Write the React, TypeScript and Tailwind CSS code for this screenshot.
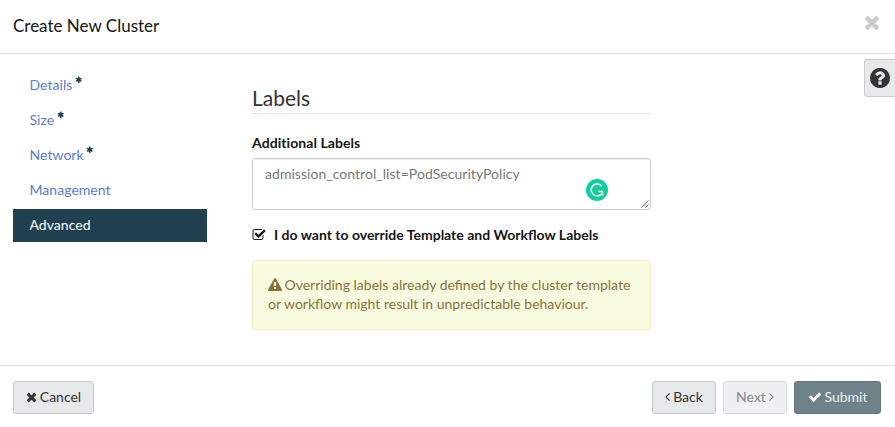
import React from 'react';

type IconProps = { d: string; className?: string; box?: string };

const Icon = ({ d, className = '', box = '0 0 1792 1792' }: IconProps) => (
  <svg viewBox={box} fill="currentColor" aria-hidden="true" className={`shrink-0 ${className}`}>
    <path d={d} />
  </svg>
);

const TIMES =
  'M1490 1322q0 40-28 68l-136 136q-28 28-68 28t-68-28l-294-294-294 294q-28 28-68 28t-68-28l-136-136q-28-28-28-68t28-68l294-294-294-294q-28-28-28-68t28-68l136-136q28-28 68-28t68 28l294 294 294-294q28-28 68-28t68 28l136 136q28 28 28 68t-28 68l-294 294 294 294q28 28 28 68z';
const CHECK =
  'M1671 566q0 40-28 68l-724 724-136 136q-28 28-68 28t-68-28l-136-136-362-362q-28-28-28-68t28-68l136-136q28-28 68-28t68 28l294 295 656-657q28-28 68-28t68 28l136 136q28 28 28 68z';
const WARNING =
  'M1024 1375v-190q0-14-9.5-23.5t-22.5-9.5h-192q-13 0-22.5 9.5t-9.5 23.5v190q0 14 9.5 23.5t22.5 9.5h192q13 0 22.5-9.5t9.5-23.5zm-2-374l18-459q0-12-10-19-13-11-24-11h-220q-11 0-24 11-10 7-10 21l17 457q0 10 10 16.5t24 6.5h185q14 0 23.5-6.5t10.5-16.5zm-14-934l768 1408q35 63-2 126-17 29-46.5 46t-63.5 17h-1536q-34 0-63.5-17t-46.5-46q-37-63-2-126l768-1408q17-31 47-49t65-18 65 18 47 49z';
const CHECK_SQUARE =
  'M1472 930v318q0 119-84.5 203.5t-203.5 84.5h-832q-119 0-203.5-84.5t-84.5-203.5v-832q0-119 84.5-203.5t203.5-84.5h832q63 0 117 25 15 7 18 23 3 17-9 29l-49 49q-10 10-23 10-3 0-9-2-23-6-45-6h-832q-66 0-113 47t-47 113v832q0 66 47 113t113 47h832q66 0 113-47t47-113v-254q0-13 9-22l64-64q10-10 23-10 6 0 12 3 20 8 20 29zm231-489l-814 814q-24 24-57 24t-57-24l-430-430q-24-24-24-57t24-57l110-110q24-24 57-24t57 24l263 263 647-647q24-24 57-24t57 24l110 110q24 24 24 57t-24 57z';
const QUESTION =
  'M1024 1376v-192q0-14-9-23t-23-9h-192q-14 0-23 9t-9 23v192q0 14 9 23t23 9h192q14 0 23-9t9-23zm256-672q0-88-55.5-163t-138.5-116-170-41q-243 0-371 213-15 24 8 42l132 100q7 6 19 6 16 0 25-12 53-68 86-92 34-24 86-24 48 0 85.5 26t37.5 59q0 38-20 61t-68 45q-63 28-115.5 86.5t-52.5 125.5v36q0 14 9 23t23 9h192q14 0 23-9t9-23q0-19 21.5-49.5t54.5-49.5q32-18 49-28.5t46-35 44.5-48 28-60.5 12.5-81zm384 192q0 209-103 385.5t-279.5 279.5-385.5 103-385.5-103-279.5-279.5-103-385.5 103-385.5 279.5-279.5 385.5-103 385.5 103 279.5 279.5 103 385.5z';
const ANGLE_LEFT =
  'M1203 544q0 13-10 23l-393 393 393 393q10 10 10 23t-10 23l-50 50q-10 10-23 10t-23-10l-466-466q-10-10-10-23t10-23l466-466q10-10 23-10t23 10l50 50q10 10 10 23z';
const ANGLE_RIGHT =
  'M1171 960q0 13-10 23l-466 466q-10 10-23 10t-23-10l-50-50q-10-10-10-23t10-23l393-393-393-393q-10-10-10-23t10-23l50-50q10-10 23-10t23 10l466 466q10 10 10 23z';
const ASTERISK =
  'M1546 1050q46 26 59.5 77.5t-12.5 97.5l-64 110q-26 46-77.5 59.5t-97.5-12.5l-266-153v307q0 52-38 90t-90 38h-128q-52 0-90-38t-38-90v-307l-266 153q-46 26-97.5 12.5t-77.5-59.5l-64-110q-26-46-12.5-97.5t59.5-77.5l266-154-266-154q-46-26-59.5-77.5t12.5-97.5l64-110q26-46 77.5-59.5t97.5 12.5l266 153v-307q0-52 38-90t90-38h128q52 0 90 38t38 90v307l266-153q46-26 97.5-12.5t77.5 59.5l64 110q26 46 12.5 97.5t-59.5 77.5l-266 154z';

const steps = [
  { name: 'Details', required: true },
  { name: 'Size', required: true },
  { name: 'Network', required: true },
  { name: 'Management', required: false },
  { name: 'Advanced', required: false, active: true },
];

export default function App() {
  return (
    <div className="flex h-[427px] w-[895px] flex-col overflow-hidden bg-white font-['Lato',sans-serif] text-sm leading-5 text-[#333]">
      <header className="flex h-[54px] shrink-0 items-center justify-between border-b border-[#e5e5e5] pl-[13px] pr-4">
        <h4 className="mb-0.5 text-[17px] leading-6 text-[#151515]">Create New Cluster</h4>
        <button aria-label="Close" className="mb-[7px] text-[#ccc]">
          <Icon d={TIMES} box="302 366 1188 1188" className="size-[14px]" />
        </button>
      </header>

      <div className="flex min-h-0 flex-1 items-start">
        <nav className="ml-[13px] mt-[15px] flex w-[194px] flex-col gap-0.5">
          {steps.map((s) => (
            <a
              key={s.name}
              className={`flex h-[33px] items-center pb-0.5 pl-[16.5px] pr-4 tracking-[0.04px] ${s.active ? 'bg-[#204050] text-white' : 'text-[#5b7bcf]'}`}
            >
              {s.name}
              {s.required && <Icon d={ASTERISK} className="mb-[9px] ml-[2.5px] size-[7.5px] text-[#204050]" />}
            </a>
          ))}
        </nav>

        <main className="ml-[45px] mt-[30px] w-[399px]">
          <h2 className="h-[30px] border-b border-[#e5e5e5] text-[21px] leading-7 text-[#333]">Labels</h2>
          <label className="mt-[19px] block font-bold tracking-[0.07px] text-[#151515]">Additional Labels</label>
          <div className="relative mt-[5px] h-[52px] rounded-[3px] border border-[#ccc] px-3 py-[5px] tracking-[0.04px] text-[#777] shadow-[inset_0_1px_1px_rgba(0,0,0,0.075)]">
            admission_control_list=PodSecurityPolicy
            <svg viewBox="0 0 22 22" className="absolute left-[333px] top-5 size-[22px]" fill="none">
              <circle cx="11" cy="11" r="11" fill="#11cf9b" />
              <path d="M15.9 7.2A6 6 0 1 0 15.6 14.9" stroke="#fff" strokeWidth="1.5" />
              <path d="M12.2 12.6H16.5V16.6" stroke="#fff" strokeWidth="1.5" />
            </svg>
            <svg viewBox="0 0 8 8" className="absolute bottom-px right-px size-2" fill="none" stroke="#666">
              <path d="M0.5 7.5L7.5 0.5M4.5 7.5L7.5 4.5" />
            </svg>
          </div>
          <div className="mt-[15px] flex items-center font-bold text-[#151515]">
            <Icon d={CHECK_SQUARE} className="mr-2 size-[14px]" />
            I do want to override Template and Workflow Labels
          </div>
          <div className="mt-[15px] h-[70px] rounded-[3px] border border-[#f5edc8] bg-[#f9fbe1] px-[15px] pt-[14px] leading-[19px] text-[#8a7238]">
            <Icon d={WARNING} className="mr-[2.5px] inline-block size-[14px] align-[-2px]" />
            Overriding labels already defined by the cluster template or workflow might result in unpredictable
            behaviour.
          </div>
        </main>

        <button
          aria-label="Help"
          className="ml-auto mt-[5px] flex h-[38px] w-[31px] items-center rounded-l-[3px] border border-r-0 border-[#ccc] bg-[#e5e9e9] pl-[5px] text-[#333]"
        >
          <Icon d={QUESTION} box="128 128 1536 1536" className="size-5" />
        </button>
      </div>

      <footer className="flex h-[62px] shrink-0 items-start border-t border-[#e5e5e5] pl-[13px] pr-[14px] pt-[15px]">
        <button className="flex h-[33px] w-[81px] items-center justify-center rounded-[3px] border border-[#c5caca] bg-[#e5e9e9] pb-px">
          <Icon d={TIMES} box="192 128 1408 1536" className="mr-[3px] h-3 w-[11px]" />
          Cancel
        </button>
        <button className="ml-auto flex h-[33px] w-16 items-center justify-center rounded-[3px] border border-[#c5caca] bg-[#e5e9e9] pb-px">
          <Icon d={ANGLE_LEFT} box="586 64 640 1792" className="mr-[3px] h-[14px] w-[5px]" />
          Back
        </button>
        <button className="ml-[7px] flex h-[33px] w-16 items-center justify-center rounded-[3px] border border-[#dadcdd] bg-[#eff0f1] pb-px text-[#888]">
          Next
          <Icon d={ANGLE_RIGHT} box="566 64 640 1792" className="ml-[3px] h-[14px] w-[5px]" />
        </button>
        <button className="ml-[7px] flex h-[33px] w-[87px] items-center justify-center rounded-[3px] border border-[#63767f] bg-[#6e828a] pb-px text-[#eef1f2]">
          <Icon d={CHECK} className="mr-[3px] size-[14px] text-white" />
          Submit
        </button>
      </footer>
    </div>
  );
}
